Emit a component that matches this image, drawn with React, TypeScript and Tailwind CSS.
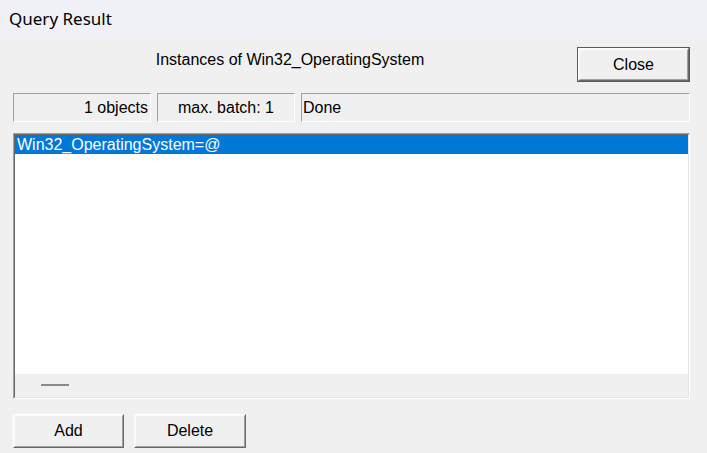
import React from "react";

const ui = { fontFamily: '"Liberation Sans", Arial, sans-serif' };

function RaisedButton({ label, isDefault, className }: { label: string; isDefault?: boolean; className?: string }) {
  const inner = (
    <div className="h-full w-full border border-t-white border-l-white border-b-[#696969] border-r-[#696969]">
      <div className="flex h-full w-full items-center justify-center border border-t-[#f8f8f8] border-l-[#f8f8f8] border-b-[#a0a0a0] border-r-[#a0a0a0] bg-[#f0f0f0] text-[16px] text-black">
        {label}
      </div>
    </div>
  );
  if (isDefault) {
    return <div className={"border border-[#5a5a5a] " + (className ?? "")}>{inner}</div>;
  }
  return <div className={className}>{inner}</div>;
}

function StatusBox({ children, className }: { children: React.ReactNode; className?: string }) {
  return (
    <div
      className={
        "flex h-full items-center border border-t-[#a0a0a0] border-l-[#a0a0a0] border-b-white border-r-white bg-[#f0f0f0] text-[16px] text-black " +
        (className ?? "")
      }
    >
      {children}
    </div>
  );
}

export default function App() {
  return (
    <div className="flex h-[453px] w-[707px] flex-col bg-[#f0f0f0]" style={ui}>
      <div className="flex h-[40px] items-center bg-[#eff1f6] pb-[2px] pl-[9px] text-[17px] text-black" style={{ fontFamily: '"Noto Sans", "Open Sans", sans-serif' }}>
        Query Result
      </div>
      <div className="flex flex-col pl-[13px] pr-[17px] pt-[7px]">
        <div className="flex items-start gap-[10px]">
          <div className="mt-[3px] flex h-[20px] flex-1 items-center justify-center text-[16px] text-black">
            Instances of Win32_OperatingSystem
          </div>
          <RaisedButton label="Close" isDefault className="h-[35px] w-[113px]" />
        </div>
        <div className="mt-[11px] flex h-[29px] gap-[6px]">
          <StatusBox className="w-[138px] justify-end pr-[2px]">1 objects</StatusBox>
          <StatusBox className="w-[138px] justify-center">max. batch: 1</StatusBox>
          <StatusBox className="flex-1 pl-[1px]">Done</StatusBox>
        </div>
        <div className="mt-[11px] h-[266px] border border-t-[#a0a0a0] border-l-[#a0a0a0] border-b-white border-r-white">
          <div className="flex h-full flex-col border border-t-[#696969] border-l-[#696969] border-b-[#e3e3e3] border-r-[#e3e3e3]">
            <div className="flex flex-1 flex-col bg-white">
              <div className="flex h-[19px] items-center bg-[#0078d7] pl-[2px] text-[16px] text-white">
                Win32_OperatingSystem=@
              </div>
            </div>
            <div className="relative h-[23px] bg-[#f0f0f0]">
              <div className="absolute left-[26px] top-[10px] h-[2px] w-[28px] bg-[#8a8a8a]" />
            </div>
          </div>
        </div>
        <div className="mt-[15px] flex h-[34px] gap-[10px]">
          <RaisedButton label="Add" className="h-full w-[111px]" />
          <RaisedButton label="Delete" className="h-full w-[112px]" />
        </div>
      </div>
    </div>
  );
}
